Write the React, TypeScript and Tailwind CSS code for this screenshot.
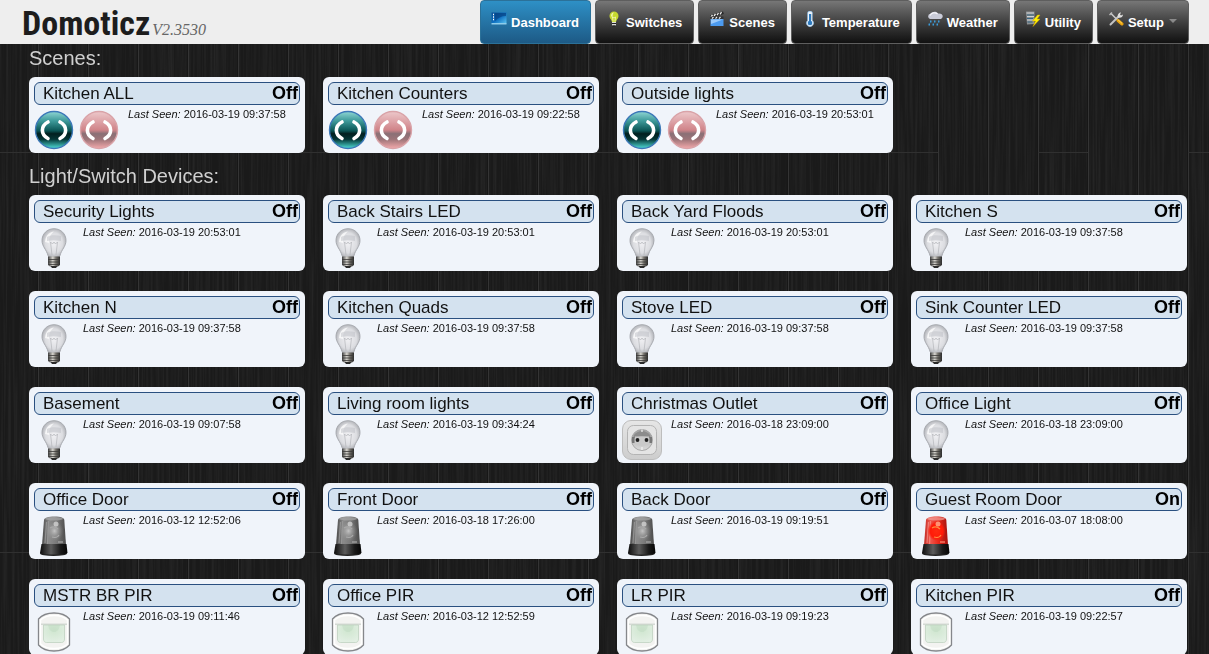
import type { ReactNode } from "react";

type IconKind = "bulb" | "outlet" | "siren" | "sirenOn" | "pir";

type Device = {
  name: string;
  status: "On" | "Off";
  lastSeen: string;
  icon: IconKind;
};

type Scene = Omit<Device, "icon">;

const scenes: Scene[] = [
  { name: "Kitchen ALL", status: "Off", lastSeen: "2016-03-19 09:37:58" },
  { name: "Kitchen Counters", status: "Off", lastSeen: "2016-03-19 09:22:58" },
  { name: "Outside lights", status: "Off", lastSeen: "2016-03-19 20:53:01" },
];

const devices: Device[] = [
  { name: "Security Lights", status: "Off", lastSeen: "2016-03-19 20:53:01", icon: "bulb" },
  { name: "Back Stairs LED", status: "Off", lastSeen: "2016-03-19 20:53:01", icon: "bulb" },
  { name: "Back Yard Floods", status: "Off", lastSeen: "2016-03-19 20:53:01", icon: "bulb" },
  { name: "Kitchen S", status: "Off", lastSeen: "2016-03-19 09:37:58", icon: "bulb" },
  { name: "Kitchen N", status: "Off", lastSeen: "2016-03-19 09:37:58", icon: "bulb" },
  { name: "Kitchen Quads", status: "Off", lastSeen: "2016-03-19 09:37:58", icon: "bulb" },
  { name: "Stove LED", status: "Off", lastSeen: "2016-03-19 09:37:58", icon: "bulb" },
  { name: "Sink Counter LED", status: "Off", lastSeen: "2016-03-19 09:37:58", icon: "bulb" },
  { name: "Basement", status: "Off", lastSeen: "2016-03-19 09:07:58", icon: "bulb" },
  { name: "Living room lights", status: "Off", lastSeen: "2016-03-19 09:34:24", icon: "bulb" },
  { name: "Christmas Outlet", status: "Off", lastSeen: "2016-03-18 23:09:00", icon: "outlet" },
  { name: "Office Light", status: "Off", lastSeen: "2016-03-18 23:09:00", icon: "bulb" },
  { name: "Office Door", status: "Off", lastSeen: "2016-03-12 12:52:06", icon: "siren" },
  { name: "Front Door", status: "Off", lastSeen: "2016-03-18 17:26:00", icon: "siren" },
  { name: "Back Door", status: "Off", lastSeen: "2016-03-19 09:19:51", icon: "siren" },
  { name: "Guest Room Door", status: "On", lastSeen: "2016-03-07 18:08:00", icon: "sirenOn" },
  { name: "MSTR BR PIR", status: "Off", lastSeen: "2016-03-19 09:11:46", icon: "pir" },
  { name: "Office PIR", status: "Off", lastSeen: "2016-03-12 12:52:59", icon: "pir" },
  { name: "LR PIR", status: "Off", lastSeen: "2016-03-19 09:19:23", icon: "pir" },
  { name: "Kitchen PIR", status: "Off", lastSeen: "2016-03-19 09:22:57", icon: "pir" },
];

// Gradients shared by all the drawings, plus the wood texture behind the page
function Backdrop() {
  return (
    <svg className="fixed inset-0 -z-10 h-full w-full" aria-hidden="true">
      <defs>
        <filter id="grain" x="0" y="0" width="100%" height="100%">
          <feTurbulence type="fractalNoise" baseFrequency="0.45 0.008" numOctaves="3" seed="4" />
          <feColorMatrix values="0 0 0 0 1  0 0 0 0 1  0 0 0 0 1  0.7 0 0 0 -0.25" />
        </filter>
        <pattern id="planks" x="38" y="152" width="150" height="400" patternUnits="userSpaceOnUse">
          <path d="M.5 0V400M50.5 0V400M100.5 0V400" stroke="#343434" />
          <path d="M149.5 0V400M49.5 0V400M99.5 0V400" stroke="#171717" />
          <path d="M100 .5H150" stroke="#303030" />
        </pattern>
        <linearGradient id="tealBall" x1="0" y1="0" x2="0" y2="1">
          <stop offset="0" stopColor="#8fd6d4" />
          <stop offset=".25" stopColor="#3f9b9b" />
          <stop offset=".52" stopColor="#0b5555" />
          <stop offset=".6" stopColor="#022020" />
          <stop offset=".75" stopColor="#043636" />
          <stop offset="1" stopColor="#4fe0d8" />
        </linearGradient>
        <linearGradient id="redBall" x1="0" y1="0" x2="0" y2="1">
          <stop offset="0" stopColor="#edc8cb" />
          <stop offset=".5" stopColor="#d08489" />
          <stop offset=".6" stopColor="#8a7076" />
          <stop offset=".75" stopColor="#9c7478" />
          <stop offset="1" stopColor="#f3a9ab" />
        </linearGradient>
        <radialGradient id="glass" cx=".5" cy=".5" r=".55">
          <stop offset="0" stopColor="#f1f1f4" />
          <stop offset=".65" stopColor="#dcdde1" />
          <stop offset="1" stopColor="#a9abb0" />
        </radialGradient>
        <linearGradient id="metal">
          <stop offset="0" stopColor="#3d3d3d" />
          <stop offset=".4" stopColor="#d8d6d0" />
          <stop offset=".65" stopColor="#75726c" />
          <stop offset="1" stopColor="#2a2a2a" />
        </linearGradient>
        <linearGradient id="plate" x1="0" y1="0" x2="0" y2="1">
          <stop offset="0" stopColor="#e6e6e6" />
          <stop offset="1" stopColor="#cdcdcd" />
        </linearGradient>
        <linearGradient id="socket" x1="0" y1="0" x2="0" y2="1">
          <stop offset="0" stopColor="#a2a2a2" />
          <stop offset="1" stopColor="#dadada" />
        </linearGradient>
        <linearGradient id="greyDome">
          <stop offset="0" stopColor="#4a4a4a" />
          <stop offset=".3" stopColor="#8b8b8b" />
          <stop offset=".6" stopColor="#7a7a7a" />
          <stop offset="1" stopColor="#4a4a4a" />
        </linearGradient>
        <linearGradient id="redDome">
          <stop offset="0" stopColor="#c02a24" />
          <stop offset=".25" stopColor="#ee5a50" />
          <stop offset=".6" stopColor="#e8281a" />
          <stop offset="1" stopColor="#a3120e" />
        </linearGradient>
        <radialGradient id="greyLamp">
          <stop offset="0" stopColor="#c4c4c4" />
          <stop offset="1" stopColor="#8c8c8c" stopOpacity="0" />
        </radialGradient>
        <radialGradient id="redLamp">
          <stop offset="0" stopColor="#ff2a10" />
          <stop offset=".7" stopColor="#ff1a08" />
          <stop offset="1" stopColor="#ff1a08" stopOpacity="0" />
        </radialGradient>
        <linearGradient id="sirenBase">
          <stop offset="0" stopColor="#0c0c0c" />
          <stop offset=".4" stopColor="#5c5c5c" />
          <stop offset=".75" stopColor="#1a1a1a" />
          <stop offset="1" stopColor="#050505" />
        </linearGradient>
        <radialGradient id="lens" cx=".5" cy=".3" r=".7">
          <stop offset="0" stopColor="#cfe6cf" />
          <stop offset="1" stopColor="#e2efe3" />
        </radialGradient>
        <linearGradient id="blueTile" x1="0" y1="0" x2="1" y2="1">
          <stop offset="0" stopColor="#0a4f96" />
          <stop offset=".5" stopColor="#0d6fc0" />
          <stop offset="1" stopColor="#5cc4f2" />
        </linearGradient>
      </defs>
      <rect width="100%" height="100%" fill="#1a1a1a" />
      <rect width="100%" height="100%" filter="url(#grain)" opacity=".15" />
      <rect width="100%" height="100%" fill="url(#planks)" />
    </svg>
  );
}

function SceneBall({ fill, ring }: { fill: string; ring: string }) {
  return (
    <svg viewBox="0 0 40 40" className="size-10" aria-hidden="true">
      <circle cx="20" cy="20" r="18.5" fill={fill} stroke={ring} strokeWidth="1.4" />
      <path
        d="M14 12C6.500 16 6.500 24.500 14 28.500M26 12c7.500 4 7.500 12.500 0 16.500"
        fill="none"
        stroke="#fff"
        strokeWidth="3.6"
        strokeLinecap="round"
      />
    </svg>
  );
}

function BulbIcon() {
  return (
    <svg viewBox="0 0 40 40" className="size-10" aria-hidden="true">
      <path
        d="M20 .7C13 .7 8 6 8 12.500c0 6 4.500 9 6 15 .3 1 1 1.500 2 1.500h8c1 0 1.700-.5 2-1.500 1.500-6 6-9 6-15C32 6 27 .7 20 .7Z"
        fill="url(#glass)"
        stroke="#a3a5aa"
        strokeWidth=".9"
      />
      <path d="M11 14c1-8 5-10 9-10.500-4 3-5 7-5 11.500Z" fill="#fff" opacity=".7" />
      <path d="M18 27l-1.500-13 2 2 1.500-2 1.500 2 2-2L22 27" fill="none" stroke="#b3b4b9" strokeWidth=".7" />
      <path d="M13 9c3-2 9-2 14-1v5c-5-1-10-1-14 0Z" fill="#b9bbc1" opacity=".45" />
      <path d="M14 28.500h12V37l-2 1.500h-8L14 37Z" fill="url(#metal)" />
      <path d="M14 31.500h12M14 34h12M14.500 36.500h11" stroke="#3b3a38" strokeWidth=".8" />
      <path d="M16.500 38h7L22 40h-4Z" fill="#2b2b2b" />
    </svg>
  );
}

function OutletIcon() {
  return (
    <svg viewBox="0 0 40 40" className="size-10" aria-hidden="true">
      <rect x=".5" y=".5" width="39" height="39" rx="8.500" fill="url(#plate)" stroke="#bdbdbd" />
      <rect x="5.500" y="5.500" width="29" height="29" rx="6" fill="#e4e4e4" stroke="#b4b4b4" />
      <circle cx="20" cy="20" r="10.500" fill="url(#socket)" stroke="#9c9c9c" strokeWidth=".8" />
      <path d="M11.500 15.500c4-6 13-6 17 0v3c-5-3-12-3-17 0Z" fill="#8c8c8c" />
      <path d="M10 17h2.500v6H10ZM27.500 17H30v6h-2.500Z" fill="#777" />
      <path d="M13 16.500h14v7c-2 3-12 3-14 0Z" fill="#c9c9c9" />
      <circle cx="15.500" cy="20" r="1.900" fill="#1f1f1f" />
      <circle cx="24.500" cy="20" r="1.900" fill="#1f1f1f" />
      <path d="M20 9.500V12M20 27v3" stroke="#f4f4f4" strokeWidth="1.2" />
    </svg>
  );
}

function SirenIcon({ on }: { on?: boolean }) {
  return (
    <svg viewBox="0 0 40 40" className="size-10" aria-hidden="true">
      <ellipse cx="19.500" cy="37.500" rx="13.500" ry="2.500" fill="#222" />
      <path d="M10 4c.3-2 4-3.500 10.500-3.500S30 2 30.300 4L32 29H8Z" fill={on ? "url(#redDome)" : "url(#greyDome)"} />
      <ellipse cx="20" cy="2.800" rx="9" ry="1.800" fill={on ? "#f0a49d" : "#aaa"} opacity=".7" />
      <path d="M12.500 6L11 27M14.500 5l-1 23" stroke={on ? "#f7938a" : "#a0a0a0"} strokeWidth="1.2" opacity=".7" />
      <ellipse cx="20.500" cy="15" rx="9" ry="10" fill={on ? "url(#redLamp)" : "url(#greyLamp)"} />
      <path d="M16 12c3-2 6-1 8 1M18 21c3 1 6 0 7-2" fill="none" stroke={on ? "#ff8a3d" : "#a9a9a9"} strokeWidth="1.3" />
      <circle cx="22" cy="8" r="2.500" fill={on ? "#ffb08e" : "#d2d2d2"} opacity=".8" />
      <path d="M24 26h5" stroke={on ? "#ff8f78" : "#a8a8a8"} strokeWidth="1.2" />
      <path d="M7.500 28h25L33.500 37c-3 2-24 2-27.500 0Z" fill="url(#sirenBase)" />
    </svg>
  );
}

function PirIcon() {
  return (
    <svg viewBox="0 0 40 40" className="size-10" aria-hidden="true">
      <path
        d="M4.500 7c7-8 24-8 31 0v26c-7 8-24 8-31 0Z"
        fill="#f3f3f1"
        stroke="#85878b"
        strokeWidth="1.3"
        strokeLinejoin="round"
      />
      <path d="M6.500 8c6-6 21-6 27 0v24c-6 6-21 6-27 0Z" fill="none" stroke="#fff" strokeWidth="1.5" />
      <path d="M7 11.500h26V13H7Z" fill="#d5dad5" />
      <path d="M9.500 13h21v14c0 2-1 3.500-3 3.500h-15c-2 0-3-1.500-3-3.500Z" fill="url(#lens)" stroke="#bfd2c0" strokeWidth=".8" />
      <path d="M14 13c1 5 3 7 6 7s5-2 6-7Z" fill="#bcd8bd" opacity=".4" />
    </svg>
  );
}

const icons: Record<IconKind, ReactNode> = {
  bulb: <BulbIcon />,
  outlet: <OutletIcon />,
  siren: <SirenIcon />,
  sirenOn: <SirenIcon on />,
  pir: <PirIcon />,
};

function NavIcon({ children }: { children: ReactNode }) {
  return (
    <svg viewBox="0 0 16 16" className="mb-2 size-4 shrink-0" aria-hidden="true">
      {children}
    </svg>
  );
}

const navItems: { label: string; icon: ReactNode }[] = [
  {
    label: "Switches",
    icon: (
      <>
        <path d="M8 .5a4.500 4.500 0 0 0-4.500 4.500c0 2.500 2 3.500 2.500 6h4c.5-2.500 2.500-3.500 2.500-6A4.500 4.500 0 0 0 8 .5Z" fill="#c6d92f" />
        <path d="M5 4.500c.3-2 1.500-3 3-3-1.200 1-1.700 3-1.500 6Z" fill="#f3f8b0" />
        <path d="M7 10.500l-.5-4.500L8 7l1.500-1-.5 4.500" fill="none" stroke="#fafad0" strokeWidth=".7" />
        <path d="M6 11h4v3.500H6Z" fill="#d9d9d9" />
        <path d="M6 12.500h4M6.500 15h3" stroke="#222" />
      </>
    ),
  },
  {
    label: "Scenes",
    icon: (
      <>
        <path d="M1 4.500L14 .5l.8 2.500L1.600 7Z" fill="#262626" />
        <path d="M2 6l1.500-2M5 5l1.500-2M8 4.200L9.500 2M11 3.300L12.500 1.200" stroke="#eee" strokeWidth="1.3" />
        <path d="M1.500 5.500h13V8h-13Z" fill="#333" />
        <path d="M3 7.700L4.500 6M6.500 7.700L8 6M10 7.700L11.500 6" stroke="#eee" strokeWidth="1.2" />
        <path d="M1.500 8h13v7h-13Z" fill="#4c9bf0" />
        <path d="M2 8.500h12L2 13Z" fill="#9ccbfb" />
      </>
    ),
  },
  {
    label: "Temperature",
    icon: (
      <>
        <path d="M5.500 2a2.500 2 0 0 1 5 0v7.500a3.600 3.600 0 1 1-5 0Z" fill="#e8f2fb" stroke="#78a9d4" strokeWidth=".6" />
        <path d="M8 3v8" stroke="#2d79bd" strokeWidth="2" />
        <circle cx="8" cy="12" r="2.300" fill="#2d79bd" />
        <path d="M9.500 4h1M9.500 6h1M9.500 8h1" stroke="#444" strokeWidth=".6" />
      </>
    ),
  },
  {
    label: "Weather",
    icon: (
      <>
        <path d="M3 8a2.700 2.700 0 0 1 .3-5.200C5 .2 9.500-.2 11 2.500c3-.5 5 1 4.700 3S14 8 13 8Z" fill="#c9cbd8" />
        <path d="M3 4.500c1.500-3 5.500-3.500 7.500-1.500" fill="none" stroke="#f5f5fa" strokeWidth="1.3" />
        <path d="M4 9.500l-.5 2M8 9.500l-.5 2M12 9.500l-.5 2M2.500 12.500L2 14.500M6.500 12.500L6 14.500M10.500 12.500l-.5 2" stroke="#3a9fe0" strokeWidth="1.4" />
      </>
    ),
  },
  {
    label: "Utility",
    icon: (
      <>
        <path d="M1 .5h8.500V13L2 13.500Z" fill="#8b8f92" />
        <path d="M1.500 2h7.500M2 5.500h7M2 9h6.500" stroke="#cfd2d4" strokeWidth="1.2" />
        <path d="M2 4h7M2 7.500h6M2.500 11h5" stroke="#35637f" />
        <path d="M12.500 4L7.500 10h3L8 15.500l7-7.500h-3l3-4Z" fill="#fff200" stroke="#d8a800" strokeWidth=".5" />
      </>
    ),
  },
  {
    label: "Setup",
    icon: (
      <>
        <path d="M2.500 13.500l8-8" stroke="#c4c4c4" strokeWidth="2" strokeLinecap="round" />
        <path d="M10 6.500c-1-3 1-5 3-5L12 3.500l1 1 2-1c0 2.500-2.500 4-5 3Z" fill="#dedede" />
        <path d="M3 2.500l6 6" stroke="#c9c9c9" strokeWidth="1.6" strokeLinecap="round" />
        <path d="M1.500 4L4 1.500" stroke="#bbb" strokeWidth="1.5" />
        <path d="M10 9.500l4 3.500" stroke="#e8a310" strokeWidth="3" strokeLinecap="round" />
        <path d="M10 8.800l4 3.500" stroke="#ffd659" />
      </>
    ),
  },
];

const tabClass =
  "flex h-[44px] items-center gap-1 rounded-[4px] border border-[#5e5e5e] bg-linear-to-b from-[#777777] to-[#111111] pt-[2px] pr-[11px] pl-[10px] text-[13px] font-bold text-white";

function Header() {
  return (
    <header className="flex h-[44px] items-start justify-between bg-[#eeeeee] pr-5 pl-[22px]">
      <a href="#dashboard" className="flex items-baseline gap-[2px] text-[#1d1d1d]">
        <span className="font-['Roboto_Condensed','Liberation_Sans_Narrow','Liberation_Sans',sans-serif] text-[34px] leading-[46px] font-bold">
          Domoticz
        </span>
        <span className="font-['Liberation_Serif',serif] text-[16px] text-[#666666] italic">V2.3530</span>
      </a>
      <nav className="flex gap-1">
        <a
          href="#dashboard"
          aria-current="page"
          className="flex h-[44px] items-center gap-1 rounded-[4px] border border-[#2b7199] bg-linear-to-b from-[#2e90c6] to-[#1d5a86] pt-[2px] pr-[11px] pl-[10px] text-[13px] font-bold text-white"
        >
          <NavIcon>
            <path d="M.5 1.500h15v11H.5Z" fill="url(#blueTile)" />
            <path d="M4 2h11v3C10 5 7 7 4 10Z" fill="#073a78" opacity=".6" />
            <path d="M2 3.500h1M2 6h1M2 8.500h1" stroke="#fff" strokeWidth="1.3" />
            <path d="M.5 12h15v1.500H.5Z" fill="#8fcdea" />
          </NavIcon>
          Dashboard
        </a>
        {navItems.map((item) =>
          item.label === "Setup" ? (
            <button key={item.label} type="button" aria-haspopup="menu" className={tabClass}>
              <NavIcon>{item.icon}</NavIcon>
              {item.label}
              <svg viewBox="0 0 8 4" className="mb-1 ml-px h-1 w-2" aria-hidden="true">
                <path d="M0 0h8L4 4Z" fill="#8a8a8a" />
              </svg>
            </button>
          ) : (
            <a key={item.label} href={`#${item.label.toLowerCase()}`} className={tabClass}>
              <NavIcon>{item.icon}</NavIcon>
              {item.label}
            </a>
          ),
        )}
      </nav>
    </header>
  );
}

function Card({ name, status, lastSeen, children }: Scene & { children: ReactNode }) {
  return (
    <article className="h-[76px] rounded-[6px] bg-[#f0f4fa] p-[5px]">
      <div className="flex h-[23px] items-center justify-between rounded-[6px] border border-[#2a5080] bg-[#d4e2ef] pr-px pl-2">
        <h3 className="text-[17px] text-[#111111]">{name}</h3>
        <span className="text-[18px] font-bold text-black">{status}</span>
      </div>
      <div className="flex items-start">
        <div className="mt-[5px] flex gap-[5px]">{children}</div>
        <p className="ml-[9px] text-[11px] leading-[18px] text-[#111111]">
          <i>Last Seen:</i> {lastSeen}
        </p>
      </div>
    </article>
  );
}

export default function App() {
  return (
    <div className="isolate min-h-screen font-['Liberation_Sans',Arial,sans-serif]">
      <Backdrop />
      <Header />
      <main className="pr-[22px] pl-[29px]">
        <section>
          <h2 className="mb-[5px] text-[20px] leading-[28px] text-[#d0d0d0]">Scenes:</h2>
          <div className="grid grid-cols-4 gap-x-[18px] gap-y-5">
            {scenes.map((scene) => (
              <Card key={scene.name} {...scene}>
                <button type="button" aria-label={`Turn on ${scene.name}`}>
                  <SceneBall fill="url(#tealBall)" ring="#3c78b8" />
                </button>
                <button type="button" aria-label={`Turn off ${scene.name}`}>
                  <SceneBall fill="url(#redBall)" ring="#d9a3a8" />
                </button>
              </Card>
            ))}
          </div>
        </section>
        <section className="pt-[9px]">
          <h2 className="mb-[5px] text-[20px] leading-[28px] text-[#d0d0d0]">Light/Switch Devices:</h2>
          <div className="grid grid-cols-4 gap-x-[18px] gap-y-5">
            {devices.map(({ icon, ...device }) => (
              <Card key={device.name} {...device}>
                <button type="button" aria-label={`Toggle ${device.name}`}>
                  {icons[icon]}
                </button>
              </Card>
            ))}
          </div>
        </section>
      </main>
    </div>
  );
}
